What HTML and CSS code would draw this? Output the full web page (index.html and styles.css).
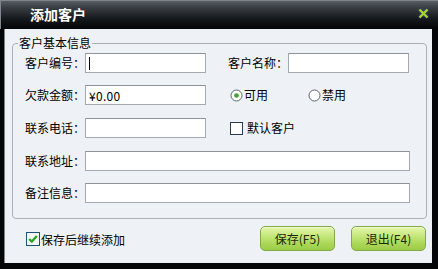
FILE: index.html
```html
<!DOCTYPE html>
<html lang="zh-CN">
<head>
<meta charset="utf-8">
<title>添加客户</title>
<link rel="stylesheet" href="styles.css">
</head>
<body>
<div class="window">
  <div class="titlebar">
    <span class="title">添加客户</span>
    <svg class="close" width="11" height="11" viewBox="0 0 11 11"><path d="M1.5 1.5 L9.5 9.5 M9.5 1.5 L1.5 9.5" stroke="#a8d432" stroke-width="2.4" fill="none"/></svg>
  </div>
  <div class="content">
    <fieldset class="group">
      <legend class="legend">客户基本信息</legend>
      <div class="row r1">
        <span class="lbl">客户编号：</span><div class="field short"><span class="caret"></span></div>
        <span class="lbl lbl2">客户名称：</span><div class="field short"></div>
      </div>
      <div class="row r2">
        <span class="lbl">欠款金额：</span><div class="field short money">¥0.00</div>
        <span class="opt opt-first">
          <svg class="radio" width="13" height="13" viewBox="0 0 13 13"><circle cx="6.5" cy="6.5" r="5.5" fill="#fff" stroke="#59636e"/><circle cx="6.5" cy="6.5" r="2.3" fill="#3ea62e"/></svg>可用
        </span>
        <span class="opt opt-second">
          <svg class="radio" width="13" height="13" viewBox="0 0 13 13"><circle cx="6.5" cy="6.5" r="5.5" fill="#fff" stroke="#59636e"/></svg>禁用
        </span>
      </div>
      <div class="row r3">
        <span class="lbl">联系电话：</span><div class="field short"></div>
        <span class="opt opt-first check-opt">
          <svg class="check" width="13" height="13" viewBox="0 0 13 13"><rect x="0.5" y="0.5" width="12" height="12" fill="#fff" stroke="#2a3c52"/></svg>默认客户
        </span>
      </div>
      <div class="row r4">
        <span class="lbl">联系地址：</span><div class="field long"></div>
      </div>
      <div class="row r5">
        <span class="lbl">备注信息：</span><div class="field long"></div>
      </div>
    </fieldset>
    <div class="footer">
      <span class="keep">
        <svg class="check" width="14" height="14" viewBox="0 0 14 14"><rect x="0.5" y="0.5" width="13" height="13" fill="#f4f6f0" stroke="#1f4e7a"/><path d="M3.2 7 L5.8 9.6 L10.8 4" stroke="#26a326" stroke-width="2.2" fill="none"/></svg>保存后继续添加
      </span>
      <div class="buttons">
        <button class="btn">保存(F5)</button>
        <button class="btn">退出(F4)</button>
      </div>
    </div>
  </div>
</div>
</body>
</html>
```

FILE: styles.css
```css
html, body {
  margin: 0;
  padding: 0;
  background: #000;
}

body {
  font-family: "Noto Sans CJK SC", "Liberation Sans", sans-serif;
  font-size: 12px;
  color: #000;
}

.window {
  width: 438px;
  height: 269px;
  background: #050607;
  display: flex;
  flex-direction: column;
}

.titlebar {
  height: 29px;
  display: flex;
  align-items: flex-start;
  background: linear-gradient(#5c6269 0%, #3a3f45 25%, #15181c 65%, #030405 100%);
  box-shadow: inset 1px 1px 0 #80868d;
}

.title {
  margin-left: 30px;
  line-height: 29px;
  font-size: 14px;
  font-weight: bold;
  color: #fff;
  letter-spacing: 0;
}

.close {
  margin-left: auto;
  margin-right: 9px;
  margin-top: 8px;
  filter: drop-shadow(0 0 1px #3a40a0);
}

.content {
  margin: 0 6px 0 4px;
  height: 234px;
  background: #eef2f6;
  border-left: 1px solid #7c8088;
  box-sizing: border-box;
}

.group {
  box-sizing: border-box;
  width: 415px;
  margin: 7px 0 0 7px;
  padding: 3px 0 15px 12px;
  border: 1px solid #a9b0b8;
  border-radius: 4px;
  min-width: 0;
}

.legend {
  margin-left: -7px;
  padding: 0 1px;
  line-height: 14px;
  font-size: 12px;
}

.row {
  display: flex;
  align-items: center;
  height: 20px;
}

.r2 { margin-top: 12px; }
.r3 { margin-top: 13px; }
.r4 { margin-top: 13px; }
.r5 { margin-top: 12px; }

.lbl {
  width: 60px;
  line-height: 20px;
  white-space: nowrap;
  flex: none;
}

.lbl2 {
  margin-left: 22px;
}

.field {
  box-sizing: border-box;
  height: 20px;
  background: #fff;
  border: 1px solid #a3a9b0;
  border-top-color: #8d949c;
  display: flex;
  align-items: center;
  padding-left: 3px;
  flex: none;
}

.short { width: 121px; }
.long { width: 325px; }

.money {
  font-size: 12px;
  letter-spacing: 0.3px;
}

.caret {
  display: block;
  width: 1px;
  height: 13px;
  background: #000;
}

.opt {
  display: flex;
  align-items: center;
  line-height: 20px;
  white-space: nowrap;
}

.opt-first { margin-left: 24px; }
.opt-second { margin-left: 40px; }

.radio { margin-right: 1px; }

.check-opt .check { margin-right: 4px; }

.footer {
  display: flex;
  align-items: center;
  margin-top: 7px;
  padding: 0 6px 0 21px;
}

.keep {
  display: flex;
  align-items: center;
  white-space: nowrap;
  margin-top: 1px;
}

.keep .check { margin-right: 1px; }

.buttons {
  margin-left: auto;
  display: flex;
  gap: 16px;
}

.btn {
  width: 75px;
  height: 25px;
  padding: 0;
  font-family: "Noto Sans CJK SC", "Liberation Sans", sans-serif;
  font-size: 12px;
  color: #1c2a08;
  border: 1px solid #82aa44;
  border-radius: 5px;
  background: linear-gradient(#e6f6ad 0%, #c4e77a 40%, #a9d655 75%, #9ccb4a 100%);
  box-shadow: inset 0 1px 0 #f2fbd0;
}
```
